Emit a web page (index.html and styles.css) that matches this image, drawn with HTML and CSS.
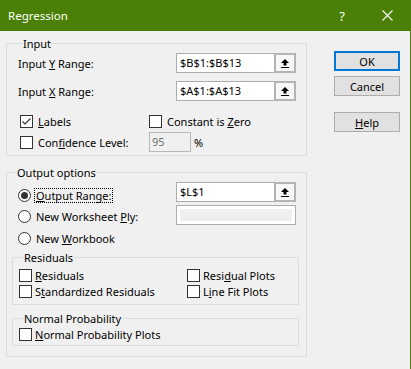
FILE: index.html
```html
<!DOCTYPE html>
<html>
<head>
<meta charset="utf-8">
<link rel="stylesheet" href="styles.css">
</head>
<body>
<div class="window">
  <div class="titlebar">
    <span class="title">Regression</span>
    <span class="tb-btn tb-help">?</span>
    <span class="tb-btn tb-close"><svg width="11" height="11" viewBox="0 0 11 11"><path d="M0.5 0.5L10.5 10.5M10.5 0.5L0.5 10.5" stroke="#fff" stroke-width="1.1" fill="none"/></svg></span>
  </div>
  <div class="body">
    <div class="main">
      <div class="group input-group">
        <div class="group-title">Input</div>
        <div class="field-row r1">
          <span class="lead">Input <u>Y</u> Range:</span>
          <div class="refedit"><span class="reftext">$B$1:$B$13</span><span class="refbtn"><svg width="8" height="9" viewBox="0 0 8 9"><path d="M4 0L8 4H5.5V6.5H2.5V4H0Z M0 8H8V9H0Z" fill="#000"/></svg></span></div>
        </div>
        <div class="field-row r2">
          <span class="lead">Input <u>X</u> Range:</span>
          <div class="refedit"><span class="reftext">$A$1:$A$13</span><span class="refbtn"><svg width="8" height="9" viewBox="0 0 8 9"><path d="M4 0L8 4H5.5V6.5H2.5V4H0Z M0 8H8V9H0Z" fill="#000"/></svg></span></div>
        </div>
        <div class="check-row c1">
          <span class="cell1 check"><span class="box"><svg width="11" height="11" viewBox="0 0 11 11"><path d="M1.5 5.5L4 8L9.5 2.5" stroke="#333" stroke-width="1.2" fill="none"/></svg></span><span><u>L</u>abels</span></span>
          <span class="check"><span class="box"></span><span>Constant is <u>Z</u>ero</span></span>
        </div>
        <div class="check-row c2">
          <span class="cell1 check"><span class="box"></span><span>Con<u>f</u>idence Level:</span></span>
          <span class="conf"><span class="confbox">95</span><span class="pct">%</span></span>
        </div>
      </div>

      <div class="group output-group">
        <div class="group-title">Output options</div>
        <div class="radio-row o1">
          <span class="lead"><span class="ropt"><span class="radio on"></span><span class="rlabel focus"><u>O</u>utput Range:</span></span></span>
          <div class="refedit"><span class="reftext">$L$1</span><span class="refbtn"><svg width="8" height="9" viewBox="0 0 8 9"><path d="M4 0L8 4H5.5V6.5H2.5V4H0Z M0 8H8V9H0Z" fill="#000"/></svg></span></div>
        </div>
        <div class="radio-row o2">
          <span class="lead"><span class="ropt"><span class="radio"></span><span class="rlabel">New Worksheet <u>P</u>ly:</span></span></span>
          <div class="plybox"><span class="plyinner"></span></div>
        </div>
        <div class="ropt o3"><span class="radio"></span><span class="rlabel">New <u>W</u>orkbook</span></div>

        <div class="group sub-group residuals">
          <div class="group-title">Residuals</div>
          <div class="cgrid">
            <span class="scheck"><span class="box"></span><span><u>R</u>esiduals</span></span>
            <span class="scheck"><span class="box"></span><span>Resi<u>d</u>ual Plots</span></span>
            <span class="scheck"><span class="box"></span><span>S<u>t</u>andardized Residuals</span></span>
            <span class="scheck"><span class="box"></span><span>L<u>i</u>ne Fit Plots</span></span>
          </div>
        </div>

        <div class="group sub-group normal">
          <div class="group-title">Normal Probability</div>
          <div class="cgrid">
            <span class="scheck"><span class="box"></span><span><u>N</u>ormal Probability Plots</span></span>
          </div>
        </div>
      </div>
    </div>

    <div class="buttons">
      <div class="btn btn-default">OK</div>
      <div class="btn btn-cancel">Cancel</div>
      <div class="btn btn-help"><u>H</u>elp</div>
    </div>
  </div>
</div>
</body>
</html>
```

FILE: styles.css
```css
* { box-sizing: border-box; }

body {
  margin: 0;
  background: #f0f0f0;
  font-family: "Noto Sans", "Segoe UI", sans-serif;
  font-size: 11px;
  color: #000;
}

u { text-underline-offset: 1px; }

.window {
  width: 411px;
  height: 369px;
  border-right: 1px solid #4b8006;
  background: #f0f0f0;
}

.titlebar {
  height: 31px;
  background: #4b8006;
  color: #fff;
  display: flex;
  align-items: center;
  padding-left: 8px;
}

.title { flex: 1; line-height: 16px; font-size: 11.5px; }

.tb-btn {
  height: 31px;
  display: flex;
  align-items: center;
  justify-content: center;
}

.tb-help { width: 46px; font-size: 13px; }
.tb-close { width: 45px; }

.body {
  display: flex;
  padding: 10px 0 0 6px;
}

.main {
  width: 301px;
  padding-top: 2px;
}

.group {
  border: 1px solid #dcdcdc;
}

.group-title {
  width: max-content;
  margin: -8px 0 0 4px;
  padding: 0 1px;
  line-height: 15px;
  background: #f0f0f0;
}

/* Input group */
.input-group { padding: 0 8px 3px 11px; }

.field-row {
  display: flex;
  align-items: center;
  height: 20px;
}

.lead { width: 158px; flex: none; }

.r1 { margin-top: 2px; }
.r2 { margin-top: 8px; }

.refedit {
  display: flex;
  width: 120px;
  height: 20px;
}

.reftext {
  flex: 1;
  border: 1px solid #adadad;
  border-right: none;
  background: #fff;
  padding-left: 3px;
  line-height: 18px;
}

.refbtn {
  width: 22px;
  height: 20px;
  border: 2px solid #b4b4b4;
  background: #f7f7f7;
  display: flex;
  align-items: center;
  justify-content: center;
}

.check-row {
  display: flex;
  align-items: center;
  height: 20px;
  padding-left: 2px;
}

.c1 { margin-top: 10px; }
.c2 { margin-top: 1px; }

.cell1 { width: 129px; flex: none; }

.check {
  display: flex;
  align-items: center;
  gap: 5px;
}

.box {
  width: 13px;
  height: 13px;
  border: 1px solid #333;
  background: #fff;
  flex: none;
  display: flex;
  align-items: center;
  justify-content: center;
}

.conf {
  display: flex;
  align-items: center;
  gap: 3px;
}

.confbox {
  width: 42px;
  height: 20px;
  border: 1px solid #b8b8b8;
  background: #f0f0f0;
  color: #6d6d6d;
  padding-left: 2px;
  line-height: 18px;
}

/* Output group */
.output-group {
  margin-top: 16px;
  padding: 0 7px 10px 5px;
}

.radio-row {
  display: flex;
  align-items: flex-start;
  height: 20px;
  padding-left: 6px;
}

.o1 { margin-top: 2px; }
.o1 .ropt { margin-top: 6px; }
.o2 { margin-top: 3px; }
.o2 .ropt { margin-top: 4px; }
.o3 { margin-top: 6px; padding-left: 6px; }

.ropt {
  display: flex;
  align-items: center;
  height: 15px;
}

.radio {
  width: 13px;
  height: 13px;
  border-radius: 50%;
  border: 1px solid #333;
  background: #fff;
  margin-right: 3px;
  flex: none;
  display: flex;
  align-items: center;
  justify-content: center;
}

.radio.on::after {
  content: "";
  width: 7px;
  height: 7px;
  border-radius: 50%;
  background: #333;
}

.rlabel {
  border: 1px dotted transparent;
  padding: 0 1px;
  line-height: 13px;
}

.rlabel.focus { border-color: #000; }

.plybox {
  width: 120px;
  height: 20px;
  border: 1px solid #adadad;
  background: #fff;
  padding: 3px;
}

.plyinner {
  display: block;
  height: 100%;
  background: #efefef;
}

.sub-group { width: 287px; }

.residuals {
  margin-top: 11px;
  padding: 0 0 5px 6px;
}

.normal {
  margin-top: 13px;
  padding: 0 0 3px 6px;
}

.residuals .cgrid { margin-top: 2px; }

.cgrid {
  display: grid;
  grid-template-columns: 168px auto;
}

.scheck {
  display: flex;
  align-items: center;
  gap: 3px;
  height: 16px;
}

/* Buttons */
.buttons {
  margin-left: 27px;
  padding-top: 10px;
}

.btn {
  width: 66px;
  height: 20px;
  background: #e1e1e1;
  border: 1px solid #adadad;
  display: flex;
  align-items: center;
  justify-content: center;
}

.btn-default { border: 2px solid #0078d7; }
.btn-cancel { margin-top: 5px; }
.btn-help { margin-top: 16px; }
```
